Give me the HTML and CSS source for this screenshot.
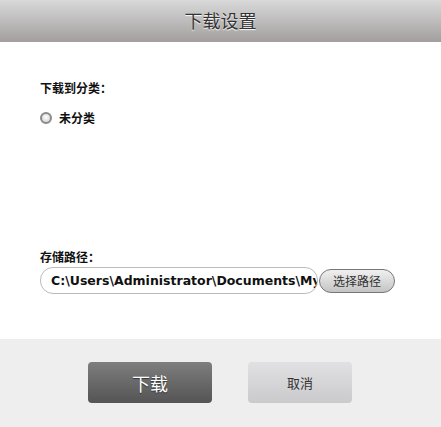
FILE: index.html
```html
<!DOCTYPE html>
<html lang="zh-CN">
<head>
  <meta charset="UTF-8">
  <title>下载设置</title>
  <link rel="stylesheet" href="styles.css">
</head>
<body>
  <div class="dialog">
    <div class="header">下载设置</div>
    <div class="content">
      <div class="label">下载到分类：</div>
      <label class="radio-row">
        <span class="radio"></span>
        <span>未分类</span>
      </label>
      <div class="label path-label">存储路径：</div>
      <div class="path-row">
        <div class="path-input">C:\Users\Administrator\Documents\My Downloads</div>
        <button class="btn-choose">选择路径</button>
      </div>
    </div>
    <div class="footer">
      <button class="btn btn-download">下载</button>
      <button class="btn btn-cancel">取消</button>
    </div>
  </div>
</body>
</html>
```

FILE: styles.css
```css
body {
  margin: 0;
  font-family: "Noto Sans CJK SC", "Liberation Sans", sans-serif;
  color: #111;
  background: #fff;
}
.dialog {
  width: 441px;
  height: 427px;
  display: flex;
  flex-direction: column;
}
.header {
  height: 42px;
  line-height: 40px;
  text-align: center;
  font-size: 18px;
  color: #333;
  text-shadow: 0 1px 1px #fff;
  background: linear-gradient(#d9d9d9, #a29e9e);
}
.content {
  height: 297px;
  padding: 37px 0 0 40px;
  box-sizing: border-box;
}
.label {
  font-size: 12px;
  font-weight: bold;
  line-height: 18px;
}
.radio-row {
  display: flex;
  align-items: center;
  gap: 7px;
  margin-top: 12px;
  font-size: 12px;
  font-weight: bold;
}
.radio {
  width: 8px;
  height: 8px;
  border-radius: 50%;
  border: 2px solid #8a8a8a;
  background: radial-gradient(circle at 50% 40%, #fff, #ccc);
}
.path-label {
  margin-top: 122px;
}
.path-row {
  display: flex;
  align-items: center;
  margin-top: 1px;
}
.path-input {
  width: 266px;
  height: 25px;
  line-height: 25px;
  padding-left: 10px;
  border: 1px solid #bbb;
  border-radius: 13px;
  font-family: "DejaVu Sans", sans-serif;
  font-size: 12.5px;
  font-weight: bold;
  white-space: nowrap;
  overflow: hidden;
  box-sizing: content-box;
}
.btn-choose {
  width: 76px;
  height: 24px;
  margin-left: 1px;
  border: 1px solid #777;
  border-radius: 12px;
  background: linear-gradient(#f0f0f0, #c4c4c4);
  font-family: "Noto Sans CJK SC", sans-serif;
  font-size: 12px;
  color: #333;
  padding: 0;
}
.footer {
  flex: 1;
  background: #eeeeee;
  display: flex;
  align-items: flex-start;
  padding: 23px 0 0 88px;
  gap: 36px;
}
.btn {
  height: 41px;
  border: none;
  border-radius: 4px;
  font-family: "Noto Sans CJK SC", sans-serif;
  padding: 0;
}
.btn-download {
  width: 124px;
  background: linear-gradient(#7e7e7e, #545454);
  color: #fff;
  font-size: 18px;
  text-shadow: 0 1px 1px #333;
}
.btn-cancel {
  width: 104px;
  background: linear-gradient(#e1e1e3, #cac9cb);
  color: #333;
  font-size: 13px;
}
```
